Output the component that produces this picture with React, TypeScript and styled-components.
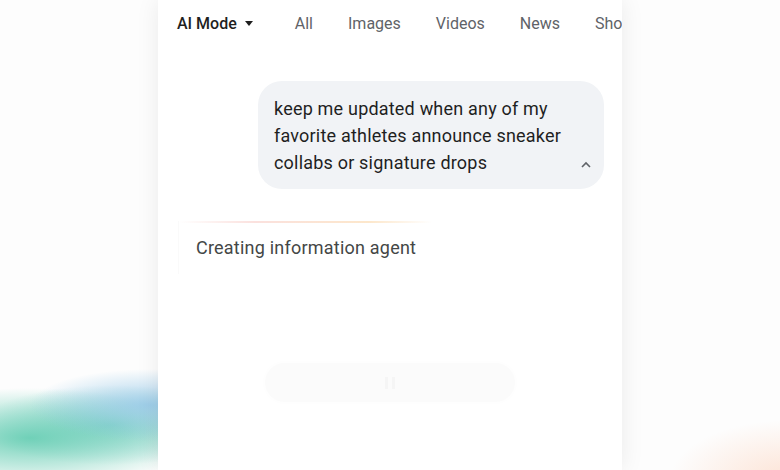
import React from 'react';
import styled, { createGlobalStyle } from 'styled-components';

const GlobalStyle = createGlobalStyle`
  html, body {
    margin: 0;
    padding: 0;
    background: #fdfdfd;
  }
  body {
    font-family: Roboto, "Noto Sans", "Liberation Sans", sans-serif;
  }
`;

const Stage = styled.div`
  width: 780px;
  height: 470px;
  overflow: hidden;
  display: flex;
  justify-content: center;
  background:
    radial-gradient(ellipse 120px 36px at 150px 405px, rgba(150, 200, 232, 0.85), rgba(150, 200, 232, 0) 100%),
    radial-gradient(ellipse 170px 50px at 30px 438px, rgba(100, 205, 178, 0.9), rgba(100, 205, 178, 0) 100%),
    radial-gradient(ellipse 130px 40px at 110px 425px, rgba(110, 202, 192, 0.75), rgba(110, 202, 192, 0) 100%),
    radial-gradient(ellipse 120px 60px at 790px 480px, rgba(252, 215, 195, 0.7), rgba(252, 215, 195, 0) 100%),
    #fdfdfd;
`;

const Phone = styled.div`
  width: 464px;
  height: 470px;
  background: #ffffff;
  box-shadow: 0 0 22px rgba(0, 0, 0, 0.08);
  display: flex;
  flex-direction: column;
  overflow: hidden;
`;

const TabBar = styled.nav`
  height: 46px;
  display: flex;
  align-items: center;
  padding-left: 19px;
  gap: 35px;
  white-space: nowrap;
`;

const Tab = styled.span<{ $active?: boolean }>`
  font-size: 16px;
  font-weight: ${p => (p.$active ? 500 : 400)};
  color: ${p => (p.$active ? '#1f1f1f' : '#5f6368')};
  display: inline-flex;
  align-items: center;
  gap: 8px;
  margin-right: ${p => (p.$active ? '7px' : '0')};
`;

const Caret = styled.span`
  width: 0;
  height: 0;
  border-left: 4.5px solid transparent;
  border-right: 4.5px solid transparent;
  border-top: 5px solid #1f1f1f;
`;

const Bubble = styled.div`
  align-self: flex-end;
  margin: 35px 18px 0 0;
  width: 346px;
  box-sizing: border-box;
  padding: 14px 36px 13px 16px;
  border-radius: 24px;
  background: #f1f3f6;
  position: relative;
  font-size: 18px;
  line-height: 27px;
  letter-spacing: 0.2px;
  color: #1f1f1f;
`;

const Chevron = styled.svg`
  position: absolute;
  right: 12px;
  bottom: 20px;
`;

const Status = styled.div`
  margin: 32px 0 0 20px;
  width: 236px;
  padding: 13px 0 12px 17px;
  position: relative;
  border-left: 1px solid rgba(0, 0, 0, 0.02);
  font-size: 18px;
  line-height: 28px;
  letter-spacing: 0.22px;
  color: #444746;

  &::before {
    content: '';
    position: absolute;
    left: 0;
    right: 0;
    top: 0;
    height: 2px;
    background: linear-gradient(90deg, rgba(250, 200, 210, 0), rgba(248, 205, 200, 0.6) 30%, rgba(252, 225, 190, 0.8) 75%, rgba(252, 230, 200, 0));
  }
`;

const PauseBar = styled.div`
  align-self: center;
  margin-top: 89px;
  width: 250px;
  height: 39px;
  border-radius: 20px;
  background: #fbfbfb;
  box-shadow: 0 0 6px rgba(0, 0, 0, 0.015);
  display: flex;
  align-items: center;
  justify-content: center;
  gap: 4px;
`;

const PauseStroke = styled.span`
  width: 3px;
  height: 12px;
  background: #f5f5f5;
`;

export default function App() {
  return (
    <>
      <GlobalStyle />
      <Stage>
        <Phone>
          <TabBar>
            <Tab $active>
              AI Mode
              <Caret />
            </Tab>
            <Tab>All</Tab>
            <Tab>Images</Tab>
            <Tab>Videos</Tab>
            <Tab>News</Tab>
            <Tab>Shopping</Tab>
          </TabBar>
          <Bubble>
            keep me updated when any of my favorite athletes announce sneaker collabs or signature drops
            <Chevron width="12" height="8" viewBox="0 0 12 8">
              <path d="M2 6 L6 2 L10 6" fill="none" stroke="#5f6368" strokeWidth="1.6" />
            </Chevron>
          </Bubble>
          <Status>Creating information agent</Status>
          <PauseBar>
            <PauseStroke />
            <PauseStroke />
          </PauseBar>
        </Phone>
      </Stage>
    </>
  );
}
